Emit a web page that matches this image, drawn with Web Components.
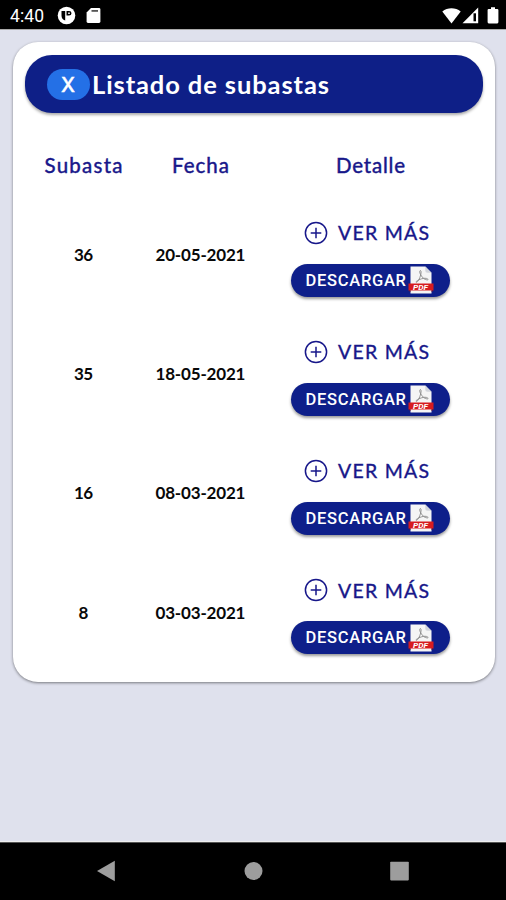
<!DOCTYPE html>
<html lang="es">
<head>
<meta charset="utf-8">
<title>Listado de subastas</title>
<style>
html,body{margin:0;height:100%}
body{font-family:Lato,"Open Sans",sans-serif;overflow:hidden}
</style>
</head>
<body>
<auction-app></auction-app>
<script>
const define = (name, html, init) => customElements.define(name, class extends HTMLElement {
  connectedCallback() {
    if (this.shadowRoot) return;
    this.attachShadow({mode: 'open'}).innerHTML = html;
    if (init) init.call(this, this.shadowRoot);
  }
});

// Tracks its label out (or in) to the number of pixels in the "width" attribute.
define('tracked-text', `<style>
:host{display:inline-block;white-space:nowrap}
span{display:inline-block}
</style><span></span>`, function (root) {
  const span = root.querySelector('span');
  span.textContent = this.getAttribute('text');
  const goal = parseFloat(this.getAttribute('width'));
  const gaps = span.textContent.length - 1;
  const spacing = (goal - span.getBoundingClientRect().width) / gaps;
  span.style.letterSpacing = spacing + 'px';
  span.style.marginRight = -spacing + 'px';
});

define('status-bar', `<style>
:host{display:flex;height:29px;background:#000;color:#fff;align-items:center;justify-content:space-between;box-sizing:border-box;padding:3px 7px 0 10px;border-bottom:1px solid #000;font:400 17.5px Roboto,sans-serif}
div{display:flex;align-items:center}
svg{display:block;fill:#fff}
</style>
<div><tracked-text text="4:40" width="34"></tracked-text>
<svg style="margin-left:13px" width="19" height="19" viewBox="0 0 19 19"><circle cx="9.5" cy="9.5" r="8.8"/><path fill="#000" d="M4.500 5h3.700v9.500Q4.500 13.500 4.500 9.500zM9.500 5h2.500q2.500 0 2.500 2.300T12 9.600H9.500z"/><path d="M11.200 6.500h1.600v1.500h-1.600z"/></svg>
<svg style="margin-left:10px" width="15" height="17" viewBox="0 0 15 17"><path d="M5 1h8a1.4 1.4 0 0 1 1.4 1.4v12.2A1.4 1.4 0 0 1 13 16H2a1.4 1.4 0 0 1-1.4-1.4V5.4z"/><path fill="#555" d="M5.500 3h6.500v1.800H5.500z"/></svg></div>
<div><svg width="19" height="16" viewBox="0 0 19 16"><path d="M.3 3.6C5.5-.8 13.5-.8 18.7 3.6L9.5 15.5z"/></svg>
<svg style="margin-left:1px" width="17" height="17" viewBox="0 0 17 17"><path d="M16.2.5v15.8H.5z"/><path fill="#000" d="M11.500 6.300h2.500v8h-2.500z"/></svg>
<svg style="margin-left:8px" width="12" height="17" viewBox="0 0 12 17"><path d="M4 .3h4v1.6h2.2q1.2 0 1.2 1.2v12q0 1.3-1.2 1.3H1.8Q.6 16.400.6 15.100v-12q0-1.200 1.200-1.200H4z"/></svg></div>`);

define('nav-bar', `<style>
:host{display:flex;height:58px;background:#000;box-sizing:border-box;border-top:1px solid #555;align-items:center;justify-content:space-between;padding:0 96px 2px}
svg{display:block;fill:#9d9d9d}
</style>
<svg width="20" height="22" viewBox="0 0 20 22"><path d="M1 11 18.800.8v20.400z"/></svg>
<svg width="20" height="20" viewBox="0 0 20 20"><circle cx="10.500" cy="10" r="9"/></svg>
<svg width="20" height="20" viewBox="0 0 20 20"><rect x=".2" y=".8" width="18.600" height="18.600" rx=".8"/></svg>`);

define('page-heading', `<style>
:host{display:flex;height:58px;border-radius:27px;background:#0e1f87;box-sizing:border-box;padding-left:22px;align-items:center;color:#fff;box-shadow:0 2px 3px #0005}
.badge{display:flex;width:43px;height:31px;border-radius:16px;background:#2470e6;align-items:center;justify-content:center;margin-right:2px}
.title{font-size:25.5px;font-weight:700;line-height:30px}
.badge span{font:500 20px Inter,sans-serif;-webkit-text-stroke:.4px #fff;padding:1px 1px 0 0}
</style><div class="badge"><span>X</span></div><tracked-text class="title" text="Listado de subastas" width="237"></tracked-text>`);

define('more-link', `<style>
:host{display:flex;align-items:center;height:34px;color:#17178a;font-size:19.5px;padding-right:8px}
svg{display:block;margin-right:10px}
tracked-text{-webkit-text-stroke:.35px currentColor}
</style>
<svg width="24" height="24" viewBox="0 0 24 24" fill="none" stroke="#17178a" stroke-width="1.500"><circle cx="12" cy="12" r="10.600"/><path d="M12 6.700v10.600M6.700 12h10.600"/></svg>
<tracked-text text="VER MÁS" width="91"></tracked-text>`);

define('pdf-icon', `<style>
:host{display:block}svg{display:block}text{font:italic 700 8px Roboto,sans-serif}
</style><svg width="26" height="28" viewBox="0 0 26 28">
<path fill="#f5f5f5" d="M2.500.5h14.800l6.200 6.300v20.700h-21z"/><path fill="#d2d5dc" d="M17.300.5v4.300q0 2 2 2h4.200z"/>
<path fill="none" stroke="#888" stroke-width=".9" d="M12.500 4.500c-2 .3 0 5.500 3.600 8.300 3.800 2.300 5.500.4 2.300-.4-4-.8-9.500 2.200-10.200 3.200-.8 1 .8 1.200 2.300-1.200 1.800-3 3.500-9.300 2-9.900z"/>
<path fill="#d61c20" d="M.5 17.500h25v7H.5z"/><path fill="#9b1015" d="m.5 24.500 2 1.500v-1.500zm25 0-2 1.500v-1.500z"/>
<text x="5" y="23.900" fill="#fff" textLength="15" lengthAdjust="spacingAndGlyphs">PDF</text></svg>`);

define('download-button', `<style>
:host{display:flex;width:159px;height:33px;box-sizing:border-box;border-radius:17px;background:#0e1f8a;color:#fff;align-items:center;padding-left:14.5px;box-shadow:0 2px 3px #0006}
tracked-text{font:500 16.500px Roboto,sans-serif}
pdf-icon{margin-left:2px}
</style><tracked-text text="DESCARGAR" width="100.5"></tracked-text><pdf-icon></pdf-icon>`);

define('auction-row', `<style>
:host{display:grid;grid-template-columns:117px 117px 223px;height:119.200px;align-items:center;justify-items:center;color:#080808;font-size:17px;font-weight:700}
.actions{display:flex;flex-direction:column;align-items:center;gap:14px;font-weight:400;padding-top:3px}
.cell{font-family:Lato,sans-serif}
</style><div class="cell number"></div><div class="cell date"></div>
<div class="actions"><more-link></more-link><download-button></download-button></div>`, function (root) {
  const id = this.getAttribute('number');
  root.querySelector('.number').innerHTML = id.length > 1
    ? `<tracked-text text="${id}" width="19"></tracked-text>` : id;
  root.querySelector('.date').innerHTML = `<tracked-text text="${this.getAttribute('date')}" width="90"></tracked-text>`;
});

define('auction-table', `<style>
:host{display:block}
.head{display:grid;grid-template-columns:117px 117px 223px;height:82px;justify-items:center;align-items:center;box-sizing:border-box;padding-top:22px;color:#17178a;font-size:20.5px;-webkit-text-stroke:.45px #17178a}
</style><div class="head"><tracked-text text="Subasta" width="78"></tracked-text><tracked-text text="Fecha" width="57"></tracked-text><tracked-text text="Detalle" width="69"></tracked-text></div><slot></slot>`);

define('app-card', `<style>
:host{display:block;height:640px;box-sizing:border-box;padding:13px 12px 0;border-radius:25px;background:#fff;box-shadow:0 1px 3px #0007}
</style><slot></slot>`);

define('auction-app', `<style>
:host{display:flex;flex-direction:column;height:900px;width:506px}
main{flex:1;background:#dfe1ed;border-top:1px solid #aaa;border-bottom:1px solid #eee;box-sizing:border-box;padding:12px 11px 0 13px}
</style><status-bar></status-bar><main><app-card>
<page-heading></page-heading><auction-table>
<auction-row number="36" date="20-05-2021"></auction-row>
<auction-row number="35" date="18-05-2021"></auction-row>
<auction-row number="16" date="08-03-2021"></auction-row>
<auction-row number="8" date="03-03-2021"></auction-row>
</auction-table></app-card></main><nav-bar></nav-bar>`);
</script>
</body>
</html>
